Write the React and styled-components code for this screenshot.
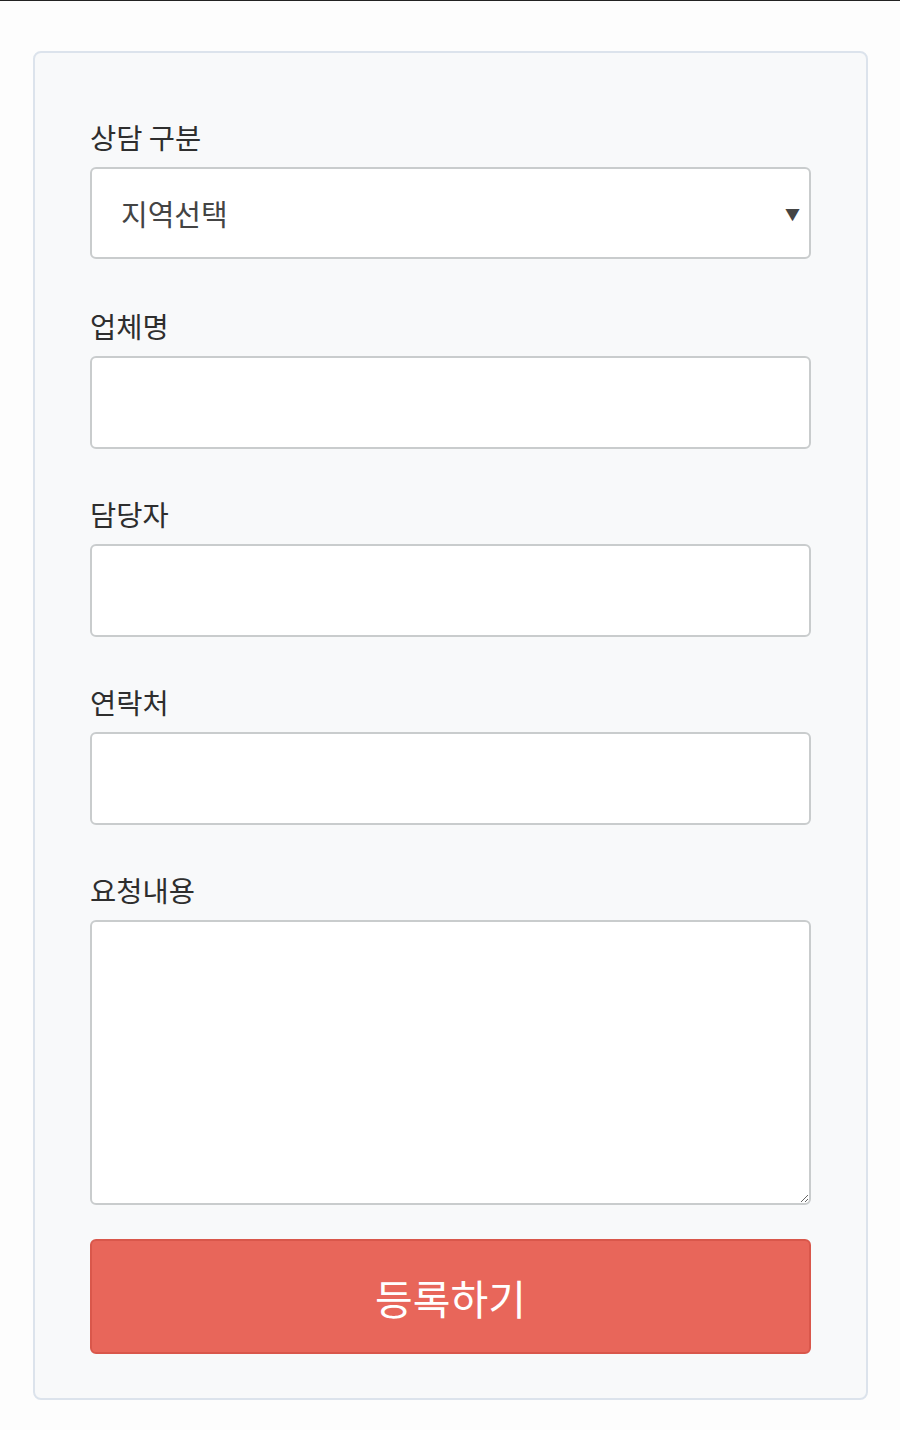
import { createGlobalStyle } from "styled-components";
import styled from "styled-components";

const GlobalStyle = createGlobalStyle`
  html, body {
    margin: 0;
    padding: 0;
    background: #fdfdfd;
  }
  body {
    font-family: "Noto Sans CJK KR", "Noto Sans", sans-serif;
    color: #333;
  }
`;

const Page = styled.div`
  border-top: 1px solid #222;
  min-height: 1429px;
  box-sizing: border-box;
  padding-top: 50px;
`;

const Card = styled.form`
  width: 835px;
  box-sizing: border-box;
  margin-left: 33px;
  padding: 64px 55px 44px;
  background: #f8f9fa;
  border: 2px solid #dce3ec;
  border-radius: 8px;
  display: flex;
  flex-direction: column;
`;

const Field = styled.div`
  display: flex;
  flex-direction: column;
  margin-bottom: ${(p) => p.$gap || "45px"};
`;

const Label = styled.label`
  font-size: 28.5px;
  line-height: 39px;
  color: #2e2e2e;
  margin-bottom: 11px;
`;

const inputBase = `
  width: 100%;
  box-sizing: border-box;
  border: 2px solid #c9cccd;
  border-radius: 6px;
  background: #fff;
  font-family: "Noto Sans CJK KR", "Noto Sans", sans-serif;
  font-size: 29px;
  color: #444;
  outline: none;
`;

const Input = styled.input`
  ${inputBase}
  height: 93px;
  padding: 0 31px;
`;

const SelectWrap = styled.div`
  position: relative;

  &::after {
    content: "▼";
    position: absolute;
    right: 11px;
    top: 50%;
    transform: translateY(-50%);
    font-size: 15px;
    color: #444;
    pointer-events: none;
  }
`;

const Select = styled.select`
  ${inputBase}
  height: 92px;
  padding: 0 29px;
  appearance: none;
  -webkit-appearance: none;
`;

const TextArea = styled.textarea`
  ${inputBase}
  height: 285px;
  padding: 20px 31px;
  resize: vertical;
  display: block;
`;

const Submit = styled.button`
  height: 115px;
  box-sizing: border-box;
  border: 2px solid #d9574b;
  border-radius: 6px;
  background: #e8665a;
  color: #fff;
  font-family: "Noto Sans CJK KR", "Noto Sans", sans-serif;
  font-size: 41px;
  cursor: pointer;
`;

export default function App() {
  return (
    <>
      <GlobalStyle />
      <Page>
        <Card onSubmit={(e) => e.preventDefault()}>
          <Field $gap="47px">
            <Label>상담 구분</Label>
            <SelectWrap>
              <Select defaultValue="">
                <option value="">지역선택</option>
                <option value="seoul">서울</option>
                <option value="busan">부산</option>
              </Select>
            </SelectWrap>
          </Field>
          <Field>
            <Label>업체명</Label>
            <Input type="text" />
          </Field>
          <Field>
            <Label>담당자</Label>
            <Input type="text" />
          </Field>
          <Field>
            <Label>연락처</Label>
            <Input type="tel" />
          </Field>
          <Field $gap="34px">
            <Label>요청내용</Label>
            <TextArea />
          </Field>
          <Submit type="submit">등록하기</Submit>
        </Card>
      </Page>
    </>
  );
}
